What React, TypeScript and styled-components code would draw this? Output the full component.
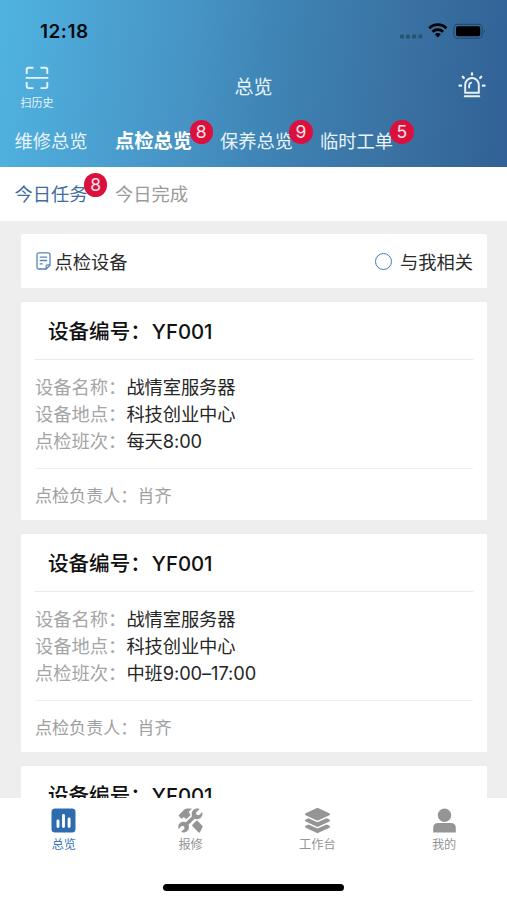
import React from "react";
import styled, { createGlobalStyle } from "styled-components";
import { FaLayerGroup } from "react-icons/fa";

const GlobalStyle = createGlobalStyle`
  * { box-sizing: border-box; }
  body {
    margin: 0;
    background: #fff;
    font-family: Inter, "Noto Sans CJK SC", sans-serif;
    -webkit-font-smoothing: antialiased;
  }
`;

const Screen = styled.div`
  width: 507px;
  height: 900px;
  display: flex;
  flex-direction: column;
  overflow: hidden;
  background: #fff;
`;

const Header = styled.header`
  height: 167px;
  flex: none;
  display: flex;
  flex-direction: column;
  color: #e9f3fa;
  background: linear-gradient(97deg, #50b3e1 0%, #4693c4 38%, #3e84b4 54%, #3a72a3 77%, #316196 100%);
`;

const StatusBar = styled.div`
  height: 62px;
  padding: 0 21px 0 40px;
  display: flex;
  align-items: center;
  justify-content: space-between;
  color: #050a0e;
`;

const Clock = styled.span`
  font-size: 19px;
  font-weight: 600;
  letter-spacing: 0.5px;
`;

const TitleBar = styled.div`
  height: 52px;
  padding: 0 20px 0 18px;
  display: grid;
  grid-template-columns: 38px 1fr 38px;
`;

const ScanButton = styled.div`
  display: flex;
  flex-direction: column;
  align-items: center;
  padding-top: 4px;
  font-size: 11px;
  line-height: 16px;
  gap: 5px;
  white-space: nowrap;
`;

const Title = styled.h1`
  margin: 0;
  padding: 12px 0 0 2px;
  font-size: 19px;
  line-height: 28px;
  font-weight: 400;
  text-align: center;
`;

const AlarmButton = styled.div`
  display: flex;
  justify-content: flex-end;
  padding-top: 9.5px;
  margin-right: 1px;
`;

const Tabs = styled.nav`
  display: flex;
  height: 53px;
  padding: 13px 0 0 14.5px;
  font-size: 18.3px;
  line-height: 28px;
`;

const SubTabs = styled(Tabs)`
  height: 54px;
  flex: none;
  background: #fff;
  box-shadow: 0 1px 1px #f4f4f4;
`;

const Tab = styled.div<{ $width: number; $bold?: boolean; $color?: string }>`
  position: relative;
  width: ${(p) => p.$width}px;
  flex: none;
  white-space: nowrap;
  color: ${(p) => p.$color ?? "inherit"};
  ${(p) => p.$bold && "font-weight: 700; font-size: 19.3px; color: #fff;"}
`;

const Badge = styled.span<{ $left: number }>`
  position: absolute;
  left: ${(p) => p.$left}px;
  top: -7px;
  width: 23.5px;
  height: 23.5px;
  border-radius: 50%;
  background: #dc103c;
  color: #f9e2e8;
  font-size: 17.5px;
  font-weight: 400;
  line-height: 23.5px;
  text-align: center;
`;

const List = styled.main`
  flex: 1;
  min-height: 0;
  overflow: hidden;
  background: #eee;
  padding: 13.3px 20.5px 0 21.4px;
  display: flex;
  flex-direction: column;
  gap: 13.5px;
`;

const FilterCard = styled.section`
  height: 54px;
  flex: none;
  padding: 0 13.5px 0 15px;
  display: flex;
  align-items: center;
  justify-content: space-between;
  background: #fff;
  border-radius: 2px;
  font-size: 18.3px;
  color: #2b2b2b;
`;

const FilterLabel = styled.div<{ $gap: number }>`
  display: flex;
  align-items: center;
  gap: ${(p) => p.$gap}px;
`;

const Radio = styled.span`
  width: 17px;
  height: 17px;
  border: 1.5px solid #4878ae;
  border-radius: 50%;
`;

const Card = styled.section`
  height: 218.6px;
  flex: none;
  padding: 0 13.5px;
  background: #fff;
  border-radius: 2px;
`;

const CardTitle = styled.h2`
  margin: 0;
  height: 58px;
  padding-left: 13px;
  border-bottom: 1px solid #e9e9e9;
  display: flex;
  font-size: 20.6px;
  line-height: 59px;
  font-weight: 500;
  color: #111;
`;

const DeviceId = styled.span`
  margin-left: 1px;
  font-size: 20.3px;
`;

const Info = styled.dl`
  margin: 0;
  height: 109px;
  padding-top: 14px;
  border-bottom: 1px solid #efefef;
  font-size: 18.3px;
  line-height: 27px;
`;

const InfoRow = styled.div`
  display: flex;
  height: 27px;
`;

const Term = styled.dt`
  width: 91.5px;
  flex: none;
  color: #a5a5a5;
  font-weight: 400;
`;

const Value = styled.dd`
  margin: 0;
  color: #262626;
  letter-spacing: -0.1px;
`;

const Owner = styled.div`
  font-size: 17.1px;
  line-height: 53px;
  color: #a0a0a0;
`;

const BottomNav = styled.footer`
  height: 102.5px;
  flex: none;
  display: flex;
  flex-direction: column;
  align-items: center;
  background: #fff;
`;

const NavItems = styled.nav`
  width: 100%;
  height: 86.5px;
  display: grid;
  grid-template-columns: repeat(4, 1fr);
`;

const NavItem = styled.div<{ $active?: boolean }>`
  display: flex;
  flex-direction: column;
  align-items: center;
  padding: 10px 0 0 1px;
  gap: 3px;
  font-size: 12.2px;
  line-height: 18px;
  color: ${(p) => (p.$active ? "#3a75b6" : "#959595")};
`;

const HomeIndicator = styled.div`
  width: 181px;
  height: 6.5px;
  border-radius: 4px;
  background: #000;
`;

const StatusIcons = () => (
  <svg width="87" height="20" viewBox="0 0 87 20">
    <g fill="#2a536f">
      <rect x="1" y="13.5" width="4" height="4" rx="1.2" />
      <rect x="7" y="13.5" width="4" height="4" rx="1.2" />
      <rect x="13.2" y="13.5" width="4" height="4" rx="1.2" />
      <rect x="19.4" y="13.5" width="4" height="4" rx="1.2" />
    </g>
    <g fill="none" stroke="#000" strokeWidth="2.8">
      <path d="M30.2 7.2a12.2 12.2 0 0 1 17.2 0" />
      <path d="M33.5 10.8a7.7 7.7 0 0 1 10.6 0" />
    </g>
    <path d="M35.8 13.3a4.5 4.5 0 0 1 6 0l-3 3.1z" fill="#000" />
    <rect x="54.8" y="3.3" width="28.5" height="14" rx="3.8" fill="none" stroke="#264d70" strokeWidth="1.2" />
    <rect x="57" y="5.3" width="24.2" height="10" rx="1.7" fill="#000" />
    <path d="M84.8 8.2q2.2 2 0 4.2z" fill="#264d70" />
  </svg>
);

const ScanIcon = () => (
  <svg width="24" height="24" viewBox="0 0 24 24" fill="none" stroke="currentColor" strokeWidth="1.9">
    <path d="M1.7 8V3.5Q1.7 1.7 3.5 1.7H8.5M15.5 1.7h5q1.8 0 1.8 1.8V8M1.7 16v4.3q0 1.8 1.8 1.8H8.5M15.5 22.1h5q1.8 0 1.8-1.8V16M.7 11.9h22.6" />
  </svg>
);

const AlarmIcon = () => (
  <svg width="28" height="27" viewBox="0 0 28 27" fill="none" stroke="currentColor" strokeWidth="1.9" strokeLinecap="round">
    <path d="M7.2 20.8v-8a6.8 6.8 0 0 1 13.6 0v8zM6.7 24.2h14.6M11.2 15.5v-2.3q0-2 2-2.6" />
    <path d="M14 1.4v1.3M4.800 4.8l1 1.1M23.200 4.8l-1 1.1M1.5 13.700h1.600M24.900 13.700h1.600" strokeWidth="2.3" />
  </svg>
);

const NoteIcon = () => (
  <svg width="15" height="18" viewBox="0 0 15 18" fill="none" stroke="#5685b7" strokeWidth="1.3">
    <path d="M3 .9h9q2 0 2 2v10.3L10.2 17H3q-2 0-2-2V2.9q0-2 2-2z" />
    <path d="M14 12.8h-2.300q-1.600 0-1.600 1.600V17M3.700 5.200h7.500M3.700 8.500h7.500M3.700 11.800h3" />
  </svg>
);

const ChartIcon = () => (
  <svg width="25" height="25" viewBox="0 0 25 25">
    <rect x=".5" y=".5" width="24" height="24" rx="3.5" fill="#2e6cb0" />
    <path d="M7 13v5.500M12.500 7.500v11M18.100 11v7.500" stroke="#fff" strokeWidth="2.900" strokeLinecap="round" />
  </svg>
);

const ToolsIcon = () => (
  <svg width="25" height="25" viewBox="0 0 25 25" fill="currentColor">
    <path d="M.5 7.600 6.200 1.500Q7.500.5 9.200.5H14L10.800 3.700 12.500 7.200 8.300 11.200 5.800 8.900 3.700 11z" />
    <path d="M15.700 14.200 19 11.300l5.300 5.400q.7.900 0 1.800L22 23.300q-.9.700-1.700 0l-6.400-6.900z" transform="translate(0 1)" />
    <path d="M21.700.9 18 4.500l.5 2.300 2.300.5L24.300 4c.8 3.500-1.300 7.200-5.300 7.200-1 0-1.700-.2-2.400-.5L10.600 16.800c1.400 4.200-1.300 7.800-5.500 7.700-.8 0-1.500-.2-2.100-.5l3.600-3.500-.6-2.200-2.300-.6L.6 21c-1.200-4 1.300-7.200 5-7.200.8 0 1.600.2 2.300.5l6.200-6.100C12.700 4.200 15.100.4 19.200.4c.9 0 1.800.1 2.500.5z" />
  </svg>
);

const PersonIcon = () => (
  <svg width="25" height="25" viewBox="0 0 25 25" fill="currentColor">
    <circle cx="12.5" cy="7.200" r="6.700" />
    <path d="M1.200 24.500V20q0-5 5-5h12.600q5 0 5 5v4.500z" />
  </svg>
);

const devices: { id: string; shift?: string }[] = [
  { id: "YF001", shift: "每天8:00" },
  { id: "YF001", shift: "中班9:00–17:00" },
  { id: "YF001" },
];

function DeviceCard({ id, shift }: { id: string; shift?: string }) {
  return (
    <Card>
      <CardTitle>设备编号：<DeviceId>{id}</DeviceId></CardTitle>
      {shift && (
        <>
          <Info>
            <InfoRow><Term>设备名称：</Term><Value>战情室服务器</Value></InfoRow>
            <InfoRow><Term>设备地点：</Term><Value>科技创业中心</Value></InfoRow>
            <InfoRow><Term>点检班次：</Term><Value>{shift}</Value></InfoRow>
          </Info>
          <Owner>点检负责人：肖齐</Owner>
        </>
      )}
    </Card>
  );
}

export default function App() {
  return (
    <Screen lang="zh-CN">
      <GlobalStyle />
      <Header>
        <StatusBar><Clock>12:18</Clock><StatusIcons /></StatusBar>
        <TitleBar>
          <ScanButton><ScanIcon />扫历史</ScanButton>
          <Title>总览</Title>
          <AlarmButton><AlarmIcon /></AlarmButton>
        </TitleBar>
        <Tabs>
          <Tab $width={100.5}>维修总览</Tab>
          <Tab $width={105} $bold>点检总览<Badge $left={74.5}>8</Badge></Tab>
          <Tab $width={100}>保养总览<Badge $left={69.3}>9</Badge></Tab>
          <Tab $width={100}>临时工单<Badge $left={70}>5</Badge></Tab>
        </Tabs>
      </Header>
      <SubTabs>
        <Tab $width={100.5} $color="#3d6da1">今日任务<Badge $left={69.3}>8</Badge></Tab>
        <Tab $width={100} $color="#9a9a9a">今日完成</Tab>
      </SubTabs>
      <List>
        <FilterCard>
          <FilterLabel $gap={3}><NoteIcon />点检设备</FilterLabel>
          <FilterLabel $gap={7.5}><Radio />与我相关</FilterLabel>
        </FilterCard>
        {devices.map((d, i) => <DeviceCard key={i} id={d.id} shift={d.shift} />)}
      </List>
      <BottomNav>
        <NavItems>
          <NavItem $active><ChartIcon />总览</NavItem>
          <NavItem><ToolsIcon />报修</NavItem>
          <NavItem><FaLayerGroup size={25} />工作台</NavItem>
          <NavItem><PersonIcon />我的</NavItem>
        </NavItems>
        <HomeIndicator />
      </BottomNav>
    </Screen>
  );
}
